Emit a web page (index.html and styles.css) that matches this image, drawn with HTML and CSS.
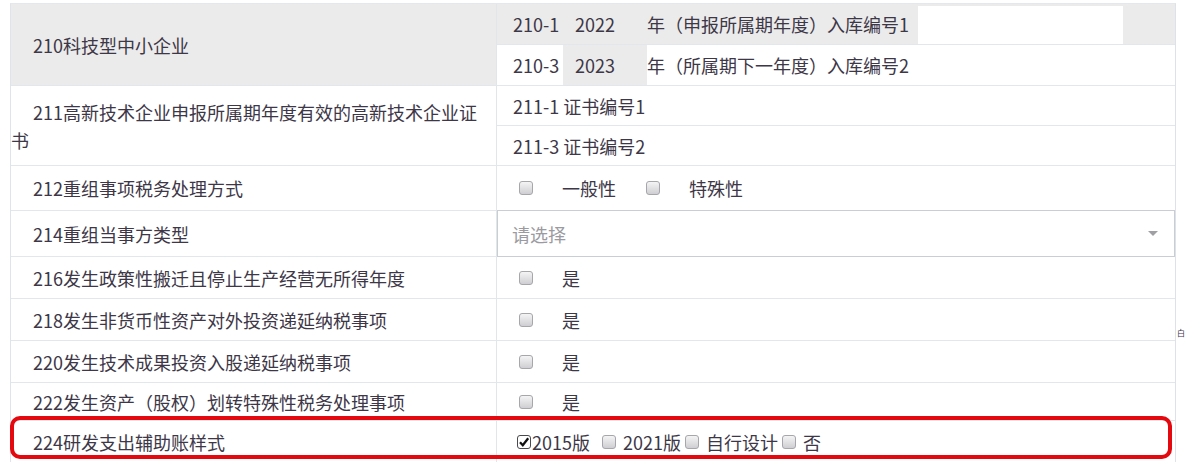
FILE: index.html
```html
<!DOCTYPE html>
<html lang="zh-CN">
<head>
    <meta charset="UTF-8">
    <title>纳税调整项目</title>
    <link rel="stylesheet" href="styles.css">
</head>
<body>
    <div class="page">
        <div class="form">
            <div class="row r210">
                <div class="label gray"><span>210科技型中小企业</span></div>
                <div class="value stack">
                    <div class="sub gray">
                        <span class="code">210-1</span><span class="year">2022</span><span class="txt">年（申报所属期年度）入库编号1</span><span class="input"></span>
                    </div>
                    <div class="sub">
                        <span class="code">210-3</span><span class="year boxed">2023</span><span class="txt">年（所属期下一年度）入库编号2</span>
                    </div>
                </div>
            </div>
            <div class="row r211">
                <div class="label"><span>211高新技术企业申报所属期年度有效的高新技术企业证书</span></div>
                <div class="value stack">
                    <div class="sub">211-1 证书编号1</div>
                    <div class="sub">211-3 证书编号2</div>
                </div>
            </div>
            <div class="row r212">
                <div class="label"><span>212重组事项税务处理方式</span></div>
                <div class="value checks">
                    <span class="cb"></span><span class="opt">一般性</span>
                    <span class="cb"></span><span class="opt">特殊性</span>
                </div>
            </div>
            <div class="row r214">
                <div class="label"><span>214重组当事方类型</span></div>
                <div class="value select">
                    <span class="placeholder">请选择</span>
                    <span class="arrow"></span>
                </div>
            </div>
            <div class="row r216">
                <div class="label"><span>216发生政策性搬迁且停止生产经营无所得年度</span></div>
                <div class="value checks"><span class="cb"></span><span class="opt">是</span></div>
            </div>
            <div class="row r218">
                <div class="label"><span>218发生非货币性资产对外投资递延纳税事项</span></div>
                <div class="value checks"><span class="cb"></span><span class="opt">是</span></div>
            </div>
            <div class="row r220">
                <div class="label"><span>220发生技术成果投资入股递延纳税事项</span></div>
                <div class="value checks"><span class="cb"></span><span class="opt">是</span></div>
            </div>
            <div class="row r222">
                <div class="label"><span>222发生资产（股权）划转特殊性税务处理事项</span></div>
                <div class="value checks"><span class="cb"></span><span class="opt">是</span></div>
            </div>
            <div class="row r224 hl">
                <div class="label"><span>224研发支出辅助账样式</span></div>
                <div class="value versions">
                    <span class="cb checked"><svg viewBox="0 0 14 14" width="14" height="14"><path d="M3 7.2 L5.8 10.2 L11.2 3.2" fill="none" stroke="#111" stroke-width="2.3"/></svg></span><span class="ver">2015版</span>
                    <span class="cb"></span><span class="ver sp">2021版</span>
                    <span class="cb"></span><span class="ver sp">自行设计</span>
                    <span class="cb"></span><span class="ver sp">否</span>
                </div>
            </div>
        </div>
        <div class="side"><span>白</span></div>
    </div>
</body>
</html>
```

FILE: styles.css
```css
body {
    margin: 0;
    background-color: #fff;
    font-family: "Noto Sans CJK SC", "Noto Sans", sans-serif;
    font-size: 18px;
    color: #3d3747;
    overflow: hidden;
}
.page {
    display: flex;
    padding: 3px 0 0 10px;
}
.form {
    flex-shrink: 0;
    width: 1164px;
    border-top: 1px solid #e4e7eb;
    border-left: 1px solid #e0e4e9;
    border-right: 1px solid #dde2e7;
}
.row {
    display: grid;
    grid-template-columns: 486px 1fr;
    box-sizing: border-box;
    border-bottom: 1px solid #e2e7ec;
}
.r210 { height: 82px; }
.r211 { height: 80px; }
.r212 { height: 45px; }
.r214 { height: 46px; }
.r216, .r218, .r220 { height: 42px; }
.r222 { height: 38px; }
.r224 { height: 42px; border-bottom: none; }
.label {
    display: flex;
    align-items: center;
    padding-right: 8px;
    border-right: 1px solid #e2e6eb;
}
.label span {
    display: block;
    text-indent: 22px;
    line-height: 28px;
}
.gray {
    background-color: #ebebeb;
}
.value {
    display: flex;
    align-items: center;
    padding-left: 16px;
}
.stack {
    flex-direction: column;
    align-items: stretch;
    padding-left: 0;
}
.sub {
    flex: 1;
    display: flex;
    align-items: center;
    padding-left: 16px;
    border-bottom: 1px solid #e2e7ec;
}
.sub:last-child {
    border-bottom: none;
}
.code {
    width: 50px;
}
.year {
    align-self: stretch;
    display: flex;
    align-items: center;
    width: 72px;
    padding-left: 12px;
}
.year.boxed {
    background-color: #ebebeb;
}
.input {
    align-self: stretch;
    width: 205px;
    margin: 2px 0 0 9px;
    background-color: #fff;
}
.checks {
    padding-left: 22px;
}
.cb {
    display: inline-block;
    flex-shrink: 0;
    box-sizing: border-box;
    width: 14px;
    height: 14px;
    border: 1px solid #a6a6ab;
    border-radius: 3px;
    background: linear-gradient(#f4f4f5, #cfcfd3);
}
.cb svg {
    display: block;
    margin: -1px;
}
.cb.checked {
    border-color: #4a4a4e;
    background: #fff;
}
.opt {
    margin: 0 30px 0 29px;
}
.select {
    padding-left: 14px;
    padding-right: 16px;
    justify-content: space-between;
    border: 1px solid #c9ced5;
    margin: -1px 0;
}
.placeholder {
    color: #9a9aa0;
}
.arrow {
    width: 0;
    height: 0;
    border-left: 5px solid transparent;
    border-right: 5px solid transparent;
    border-top: 5px solid #a0a0a4;
}
.versions {
    padding-left: 20px;
}
.ver {
    margin-right: 12px;
    margin-left: 1px;
}
.ver.sp {
    margin-left: 7px;
    margin-right: 4px;
}
.hl {
    position: relative;
}
.hl::after {
    content: "";
    position: absolute;
    left: -1px;
    right: 3px;
    top: -5px;
    height: 43px;
    box-sizing: border-box;
    border: 4px solid #e3090f;
    border-radius: 10px;
}
.side {
    padding: 324px 0 0 1px;
    font-size: 8px;
    line-height: 12px;
}
```
